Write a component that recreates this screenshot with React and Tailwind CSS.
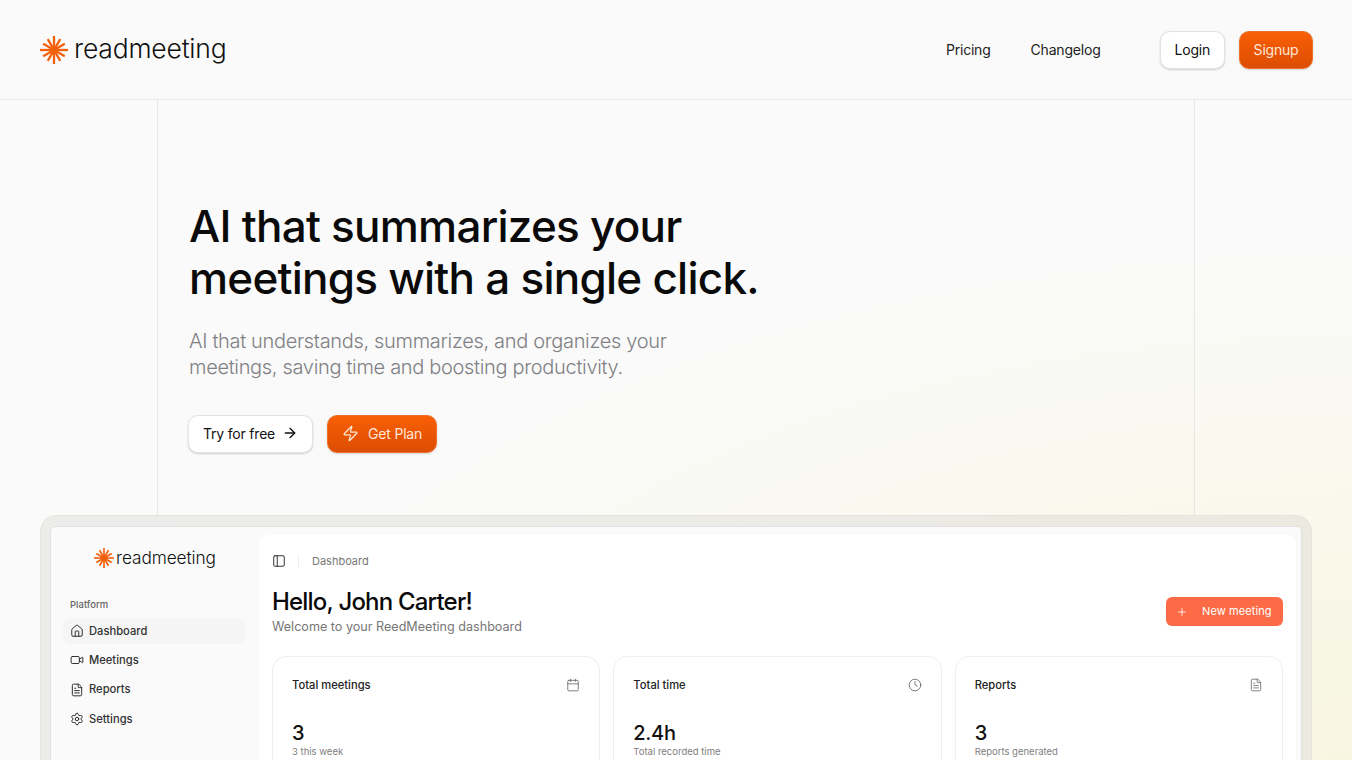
import { House, Video, FileText, Settings, PanelLeft, Calendar, Clock, Plus, ArrowRight, Zap } from 'lucide-react'

function Logo({ size = 28, textClass }) {
  const rays = []
  for (let i = 0; i < 12; i++) rays.push(i * 30)
  return (
    <div className="flex items-center">
      <svg width={size} height={size} viewBox="0 0 28 28" className="shrink-0">
        {rays.map(a => (
          <line
            key={a}
            x1="14"
            y1={a % 90 === 0 ? 0 : 1.5}
            x2="14"
            y2="12"
            stroke="#f4600c"
            strokeWidth="2.3"
            transform={`rotate(${a} 14 14)`}
          />
        ))}
        <circle cx="14" cy="14" r="4.5" fill="#f4600c" />
      </svg>
      <span className={textClass}>readmeeting</span>
    </div>
  )
}

const orangeBtn = 'flex items-center rounded-[10px] border border-[#f0702a] bg-gradient-to-b from-[#f95f06] to-[#dc4d03] text-[#ffe6d6] text-[14px] h-[38px] pb-[2px] shadow-[0_1px_2px_rgba(0,0,0,0.15)]'
const whiteBtn = 'flex items-center rounded-[10px] border border-[#e4e4e4] bg-white text-[#111] text-[14px] h-[38px] pb-[2px] shadow-[0_1px_2px_rgba(0,0,0,0.18)]'

function NavItem({ icon: Icon, label, active }) {
  return (
    <div className={`flex items-center gap-[5px] h-[26px] px-[7px] rounded-lg text-[11.2px] font-medium text-[#333] ${active ? 'bg-[#f5f5f5]' : ''}`}>
      <Icon size={14} strokeWidth={1.6} className="text-[#222]" />
      <span>{label}</span>
    </div>
  )
}

function StatCard({ title, icon: Icon, value, note }) {
  return (
    <div className="flex-1 h-[140px] rounded-[14px] border border-[#efefef] bg-white px-[19px] pt-[20px]">
      <div className="flex items-center justify-between h-[16px]">
        <span className="text-[11.2px] font-medium text-[#222]">{title}</span>
        <Icon size={14} strokeWidth={1.4} className="text-[#666]" />
      </div>
      <div className="mt-[26px] text-[20px] leading-[28px] font-medium tracking-[-0.3px] text-[#111]">{value}</div>
      <div className="text-[9.5px] leading-[11px] text-[#808080] -mt-[1px]">{note}</div>
    </div>
  )
}

export default function App() {
  return (
    <div className="h-screen overflow-hidden bg-[#fafafa] bg-[radial-gradient(ellipse_1150px_560px_at_100%_105%,#f8f6e0_0%,#f9f8ea_45%,#fafafa_100%)] font-['Inter',sans-serif]">
      <header className="h-[100px] border-b border-[#e8e8e8] bg-[#fafafa] flex items-center justify-between pl-[40px] pr-[39px] pt-[1px]">
        <Logo size={28} textClass="ml-[6px] pb-[2px] text-[26.5px] font-light tracking-[-0.2px] text-[#111]" />
        <div className="flex items-center">
          <nav className="flex items-center gap-[40px] pb-[2px] text-[14px] text-[#222] mr-[59px]">
            <span className="tracking-[-0.2px]">Pricing</span>
            <span className="tracking-[-0.2px]">Changelog</span>
          </nav>
          <div className={`${whiteBtn} px-[14px] mr-[14px] tracking-[-0.2px]`}>Login</div>
          <div className={`${orangeBtn} px-[13.5px] tracking-[-0.2px]`}>Signup</div>
        </div>
      </header>

      <section className="w-[1038px] h-[415px] mx-auto border-x border-[#e8e8e8] pl-[31px] pt-[100px]">
        <h1 className="text-[44px] leading-[52px] font-medium tracking-[-0.75px] text-[#0a0a0a]">
          AI that summarizes your
          <br />
          meetings with a single click.
        </h1>
        <p className="mt-[24px] text-[20px] leading-[26px] tracking-[-0.32px] text-[#808084] font-light">
          AI that understands, summarizes, and organizes your
          <br />
          meetings, saving time and boosting productivity.
        </p>
        <div className="flex items-center gap-[14px] mt-[35px]">
          <div className={`${whiteBtn} -ml-[1px] pl-[14px] pr-[14px] gap-[7px] tracking-[-0.2px]`}>
            Try for free <ArrowRight size={16} strokeWidth={2} />
          </div>
          <div className={`${orangeBtn} pl-[14px] pr-[14px] gap-[9px] tracking-[-0.2px]`}>
            <Zap size={17} strokeWidth={1.8} /> Get Plan
          </div>
        </div>
      </section>

      <section className="mx-[40px] rounded-t-[16px] border border-[#e5e4de] bg-gradient-to-r from-[#ecedeb] to-[#ece9e1] pt-[10px] px-[9px] h-[300px]">
        <div className="flex h-full rounded-t-[5px] border border-[#e2e2e2] bg-[#fafafa] pt-[8px] pr-[5px]">
          <aside className="w-[208px] shrink-0 pl-[12px] pr-[13px]">
            <div className="flex justify-center pt-[10px] pl-[1px]">
              <Logo size={20} textClass="ml-[2px] text-[17.3px] font-light tracking-[-0.1px] text-[#111]" />
            </div>
            <div className="mt-[27px] pl-[7px] text-[9.5px] leading-[14px] text-[#666] font-medium">Platform</div>
            <div className="mt-[6px] flex flex-col gap-[3.4px]">
              <NavItem icon={House} label="Dashboard" active />
              <NavItem icon={Video} label="Meetings" />
              <NavItem icon={FileText} label="Reports" />
              <NavItem icon={Settings} label="Settings" />
            </div>
          </aside>
          <main className="flex-1 rounded-t-[10px] bg-white pl-[13px] pr-[13px] pt-[17px]">
            <div className="flex items-center h-[18px]">
              <PanelLeft size={14} strokeWidth={1.6} className="text-[#222]" />
              <div className="w-px h-[14px] bg-[#eee] ml-[12px] mr-[13px]" />
              <span className="text-[11px] text-[#777]">Dashboard</span>
            </div>
            <div className="flex items-center justify-between mt-[18px]">
              <div>
                <div className="text-[24px] leading-[27px] font-medium tracking-[-0.8px] text-[#0a0a0a]">Hello, John Carter!</div>
                <div className="text-[12.6px] leading-[17px] mt-[3px] text-[#777]">Welcome to your ReedMeeting dashboard</div>
              </div>
              <div className="flex items-center h-[29px] w-[117px] rounded-[6px] bg-[#fd6b46] text-white text-[11px] tracking-[0.1px] pl-[10px] gap-[14px]">
                <Plus size={12} strokeWidth={1.6} />
                New meeting
              </div>
            </div>
            <div className="flex gap-[13px] mt-[21px]">
              <StatCard title="Total meetings" icon={Calendar} value="3" note="3 this week" />
              <StatCard title="Total time" icon={Clock} value="2.4h" note="Total recorded time" />
              <StatCard title="Reports" icon={FileText} value="3" note="Reports generated" />
            </div>
          </main>
        </div>
      </section>
    </div>
  )
}
